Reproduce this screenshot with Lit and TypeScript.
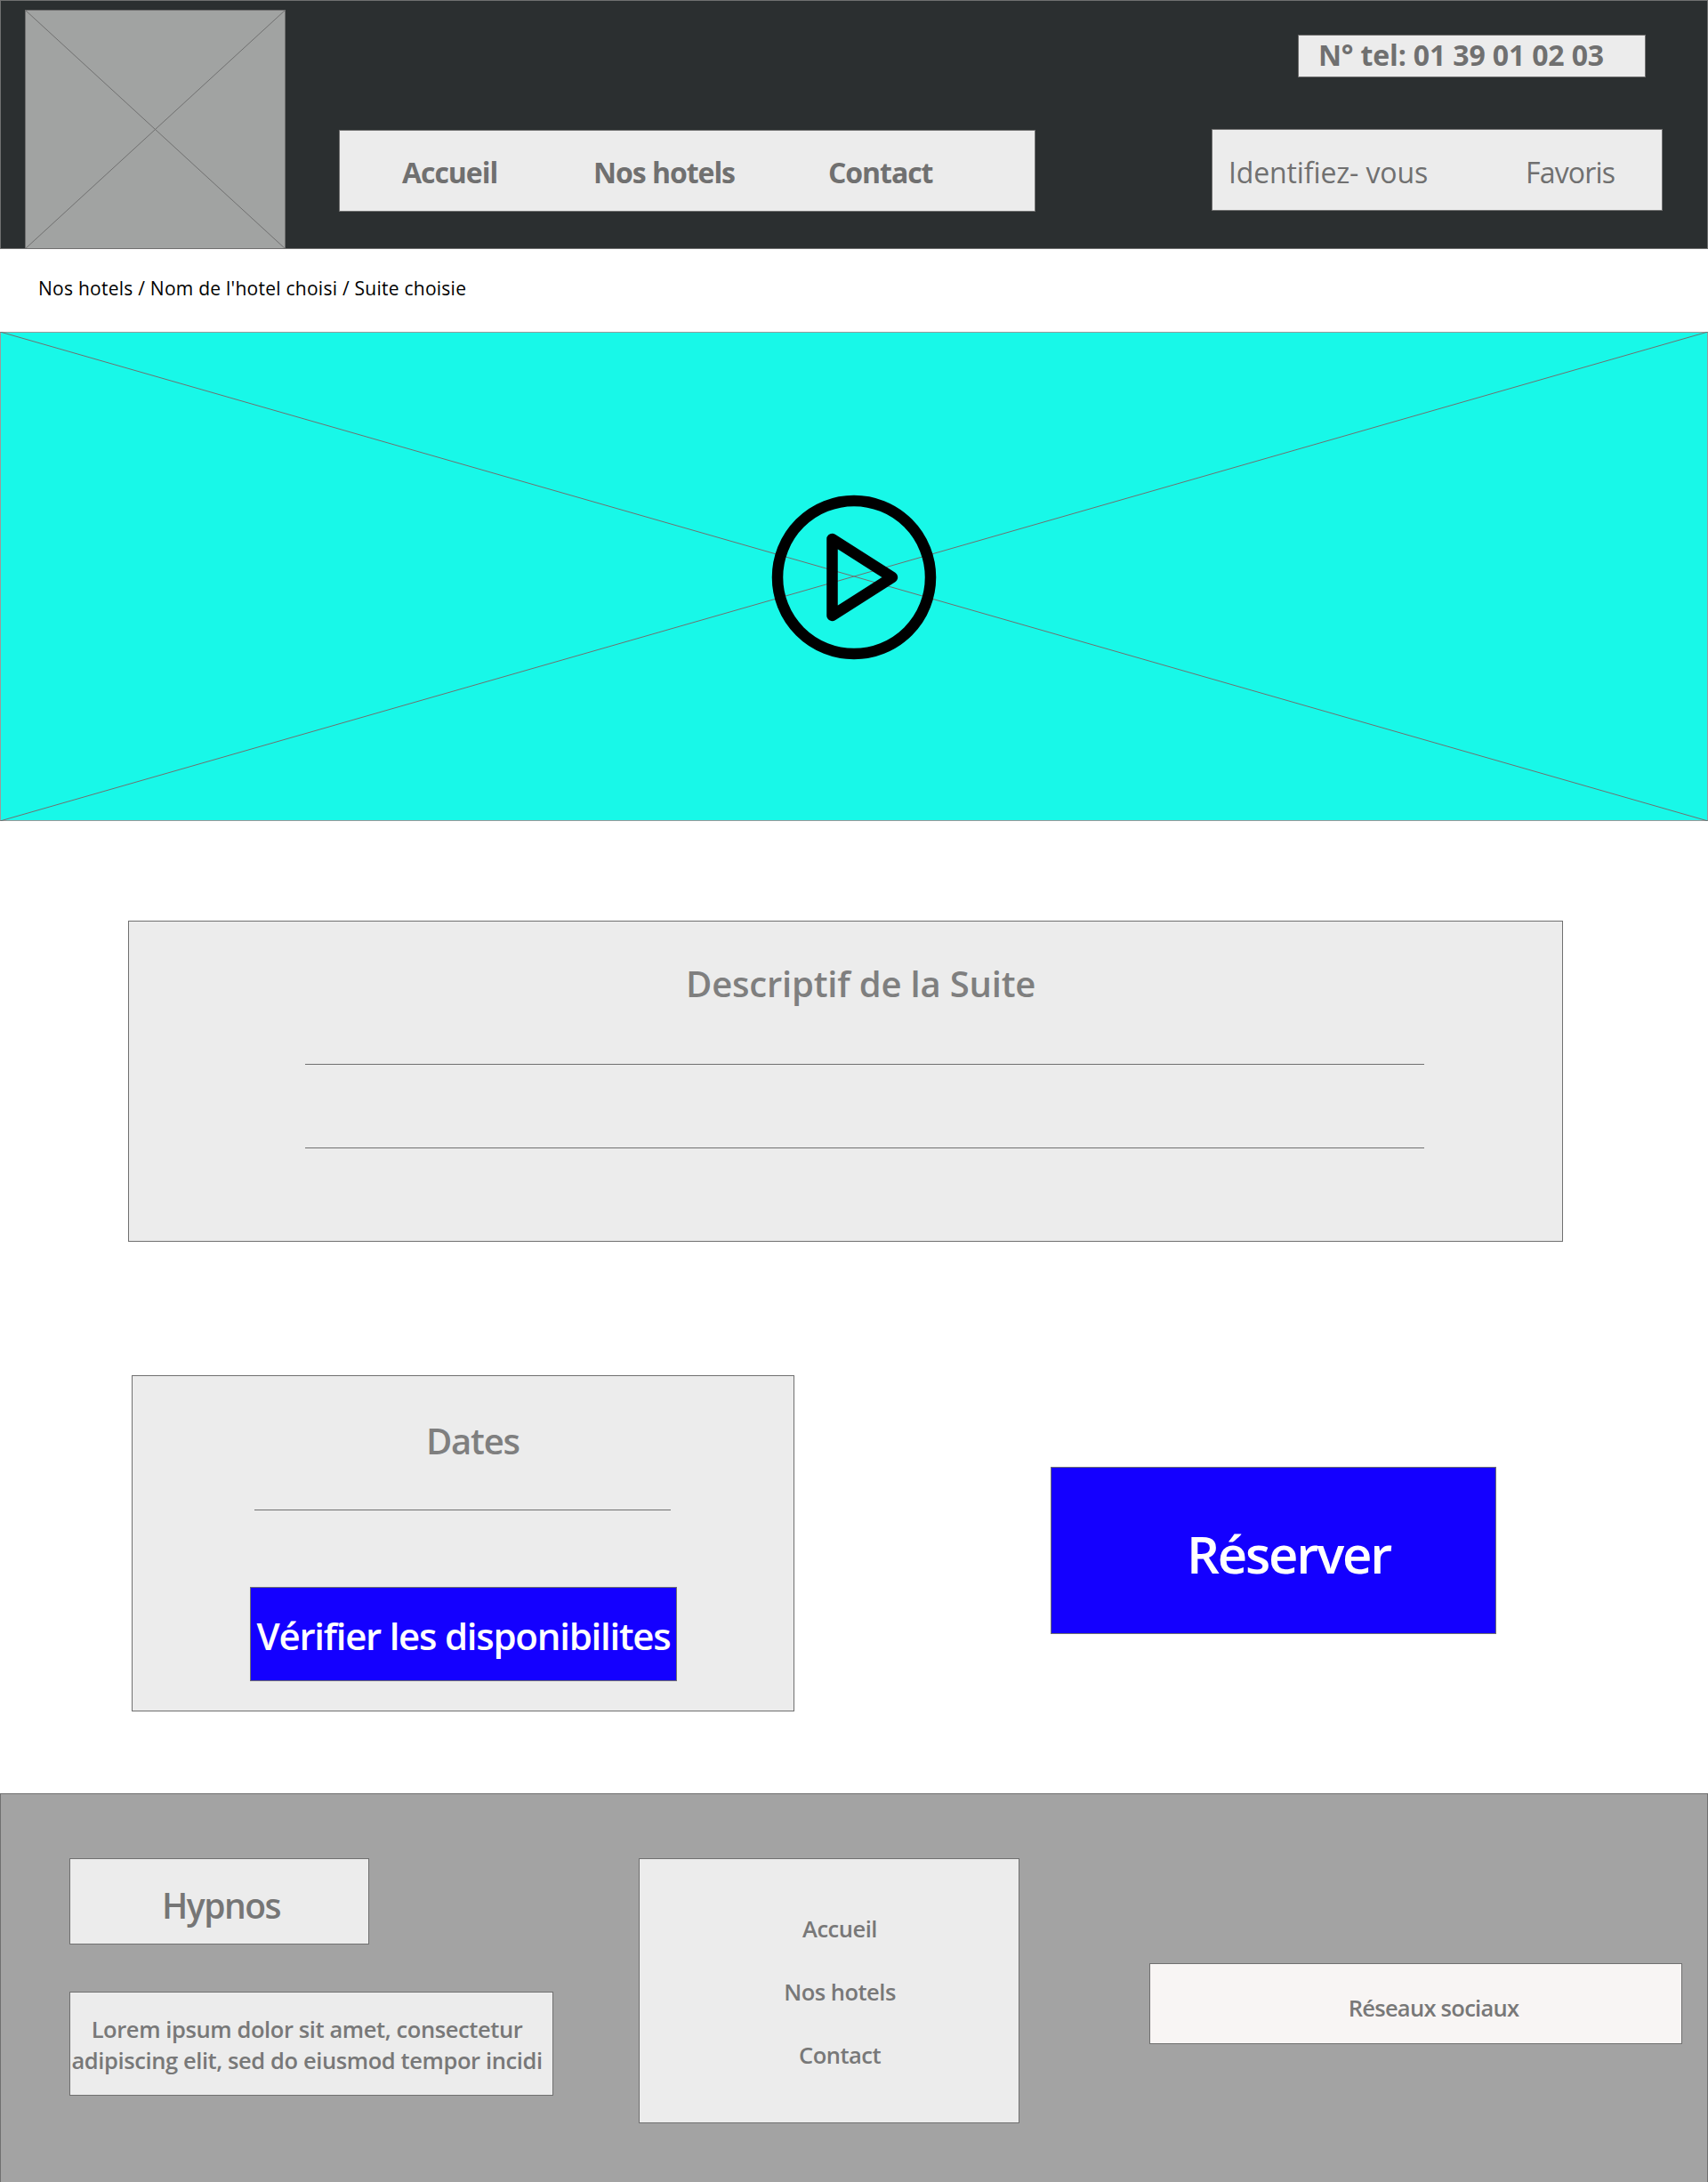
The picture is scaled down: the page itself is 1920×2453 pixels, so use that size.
import { LitElement, html, css } from "lit";
import { customElement } from "lit/decorators.js";

@customElement("app-root")
export class AppRoot extends LitElement {
  static styles = css`
    :host { display: block; width: 1920px; height: 2453px; overflow: hidden; background: #fff; font-family: "Open Sans", "Noto Sans", sans-serif; color: #707070; }
    * { box-sizing: border-box; }
    .box { border: 1px solid #707070; background: #ececec; display: flex; white-space: nowrap; }
    header { height: 280px; background: #2b2f30; border: 1px solid #707070; display: flex; }
    .logo { width: 293px; height: 269px; margin: 10px 0 0 27px; display: block; flex: none; }
    .nav { width: 783px; height: 92px; margin: 145px 0 0 60px; flex: none; align-items: center; font-size: 32px; font-weight: 700; letter-spacing: -1.05px; padding-top: 2px; }
    .nav .a { margin-left: 70px; }
    .nav .b { margin-left: 108px; }
    .nav .c { margin-left: 105px; }
    .right { margin-left: 198px; width: 510px; flex: none; display: flex; flex-direction: column; }
    .tel { width: 391px; height: 48px; margin: 38px 0 0 97px; align-items: center; padding: 0 0 3px 22px; font-size: 32px; font-weight: 700; letter-spacing: -0.15px; }
    .auth { width: 507px; height: 92px; margin-top: 58px; align-items: center; padding: 5px 0 0 18px; font-size: 32px; }
    .auth .id { letter-spacing: -0.13px; }
    .auth .fav { margin-left: 110px; letter-spacing: -0.85px; }
    .crumb { height: 93px; padding: 0 0 5px 43px; display: flex; align-items: center; color: #000; font-size: 21px; letter-spacing: 0.25px; }
    .hero { display: block; width: 1920px; height: 550px; }
    .desc { width: 1613px; height: 361px; margin: 112px 0 0 144px; flex-direction: column; }
    .title { font-size: 40px; font-weight: 600; color: #7f7f7f; line-height: 54px; }
    .desc .title { margin: 43px 0 0 626px; letter-spacing: -0.19px; }
    .rule { height: 1px; background: #707070; flex: none; }
    .desc .rule { width: 1258px; margin-left: 198px; }
    .desc .r1 { margin-top: 63px; }
    .desc .r2 { margin-top: 93px; }
    .row { display: flex; margin: 150px 0 0 148px; }
    .dates { width: 745px; height: 378px; flex-direction: column; }
    .dates .title { margin: 46px 0 0 330px; letter-spacing: -1.2px; }
    .dates .rule { width: 468px; margin: 50px 0 0 137px; }
    .blue { background: #1400ff; border: 1px solid #707070; color: #fff; display: flex; align-items: center; justify-content: center; white-space: nowrap; }
    .check { width: 480px; height: 106px; margin: 86px 0 0 132px; padding-top: 2px; font-size: 42px; font-weight: 600; letter-spacing: -1.25px; }
    .book { width: 501px; height: 188px; margin: 103px 0 0 288px; padding: 6px 0 0 34px; font-size: 58px; font-weight: 600; letter-spacing: -2.2px; }
    footer { height: 437px; margin-top: 92px; background: #a3a3a3; border: 1px solid #707070; border-bottom: 0; display: flex; }
    .col1 { margin: 72px 0 0 77px; width: 640px; flex: none; display: flex; flex-direction: column; }
    .brand { width: 337px; height: 97px; align-items: center; justify-content: center; padding: 8px 0 0 4px; font-size: 39px; font-weight: 600; letter-spacing: -1.5px; color: #767676; }
    .lorem { width: 544px; height: 117px; margin-top: 53px; align-items: center; justify-content: center; text-align: center; padding: 2px 10px 0 0; font-size: 25.5px; font-weight: 600; line-height: 35px; letter-spacing: -0.4px; color: #787878; }
    .links { width: 428px; height: 298px; margin-top: 72px; flex: none; flex-direction: column; align-items: center; padding: 60px 0 0 24px; gap: 35px; font-size: 25.5px; font-weight: 600; line-height: 36px; letter-spacing: -0.5px; color: #787878; }
    .social { width: 599px; height: 91px; margin: 190px 0 0 146px; flex: none; background: #f8f5f4; align-items: center; justify-content: center; padding: 9px 0 0 40px; font-size: 25.5px; font-weight: 600; letter-spacing: -0.73px; color: #787878; }
  `;

  render() {
    return html`
      <header>
        <svg class="logo" viewBox="0 0 293 269" preserveAspectRatio="none">
          <rect x="0.5" y="0.5" width="292" height="268" fill="#a1a3a2" stroke="#707070" />
          <path d="M0 0L293 269M293 0L0 269" stroke="#707070" stroke-width="1" />
        </svg>
        <div class="box nav">
          <span class="a">Accueil</span>
          <span class="b">Nos hotels</span>
          <span class="c">Contact</span>
        </div>
        <div class="right">
          <div class="box tel"><span>N° tel: 01 39 01 02 03</span></div>
          <div class="box auth">
            <span class="id">Identifiez- vous</span>
            <span class="fav">Favoris</span>
          </div>
        </div>
      </header>
      <div class="crumb"><span>Nos hotels / Nom de l'hotel choisi / Suite choisie</span></div>
      <svg class="hero" viewBox="0 0 1920 550">
        <rect x="0.5" y="0.5" width="1919" height="549" fill="#18f8e8" stroke="#9a9a9a" />
        <path d="M0 0L1920 550M1920 0L0 550" stroke="#707070" stroke-width="1" />
        <circle cx="960" cy="276" r="86" fill="none" stroke="#000" stroke-width="12.5" />
        <path d="M935.5 233L1003 276L935.5 319Z" fill="none" stroke="#000" stroke-width="12.5" stroke-linejoin="round" />
      </svg>
      <div class="box desc">
        <span class="title">Descriptif de la Suite</span>
        <div class="rule r1"></div>
        <div class="rule r2"></div>
      </div>
      <div class="row">
        <div class="box dates">
          <span class="title">Dates</span>
          <div class="rule"></div>
          <div class="blue check"><span>Vérifier les disponibilites</span></div>
        </div>
        <div class="blue book"><span>Réserver</span></div>
      </div>
      <footer>
        <div class="col1">
          <div class="box brand"><span>Hypnos</span></div>
          <div class="box lorem"><span>Lorem ipsum dolor sit amet, consectetur<br />adipiscing elit, sed do eiusmod tempor incidi</span></div>
        </div>
        <div class="box links">
          <span>Accueil</span><span>Nos hotels</span><span>Contact</span>
        </div>
        <div class="box social"><span>Réseaux sociaux</span></div>
      </footer>
    `;
  }
}
